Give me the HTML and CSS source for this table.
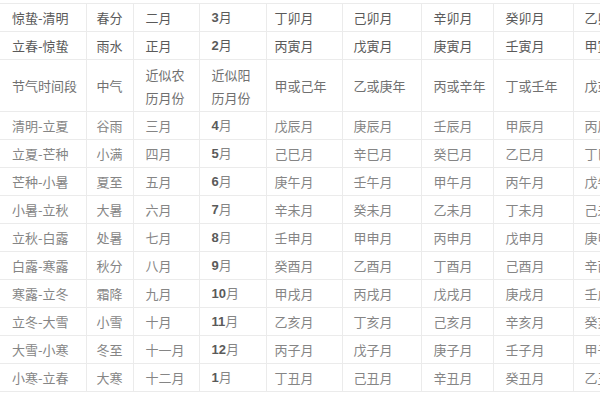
FILE: index.html
```html
<!DOCTYPE html>
<html lang="zh-CN">
<head>
<meta charset="utf-8">
<title>节气月份表</title>
<link rel="stylesheet" href="styles.css">
</head>
<body>
<div class="wrap">
<table class="tbl">
<colgroup>
<col class="c1"><col class="c2"><col class="c3"><col class="c4"><col class="c5"><col class="c6"><col class="c7"><col class="c8"><col class="c9">
</colgroup>
<tbody>
<tr class="dark"><td>惊蛰-清明</td><td>春分</td><td>二月</td><td><b class="n">3</b>月</td><td>丁卯月</td><td>己卯月</td><td>辛卯月</td><td>癸卯月</td><td>乙卯月</td></tr>
<tr class="dark"><td>立春-惊蛰</td><td>雨水</td><td>正月</td><td><b class="n">2</b>月</td><td>丙寅月</td><td>戊寅月</td><td>庚寅月</td><td>壬寅月</td><td>甲寅月</td></tr>
<tr class="head"><td>节气时间段</td><td>中气</td><td>近似农<br>历月份</td><td>近似阳<br>历月份</td><td>甲或己年</td><td>乙或庚年</td><td>丙或辛年</td><td>丁或壬年</td><td>戊或癸年</td></tr>
<tr><td>清明-立夏</td><td>谷雨</td><td>三月</td><td><b class="n">4</b>月</td><td>戊辰月</td><td>庚辰月</td><td>壬辰月</td><td>甲辰月</td><td>丙辰月</td></tr>
<tr><td>立夏-芒种</td><td>小满</td><td>四月</td><td><b class="n">5</b>月</td><td>己巳月</td><td>辛巳月</td><td>癸巳月</td><td>乙巳月</td><td>丁巳月</td></tr>
<tr><td>芒种-小暑</td><td>夏至</td><td>五月</td><td><b class="n">6</b>月</td><td>庚午月</td><td>壬午月</td><td>甲午月</td><td>丙午月</td><td>戊午月</td></tr>
<tr><td>小暑-立秋</td><td>大暑</td><td>六月</td><td><b class="n">7</b>月</td><td>辛未月</td><td>癸未月</td><td>乙未月</td><td>丁未月</td><td>己未月</td></tr>
<tr><td>立秋-白露</td><td>处暑</td><td>七月</td><td><b class="n">8</b>月</td><td>壬申月</td><td>甲申月</td><td>丙申月</td><td>戊申月</td><td>庚申月</td></tr>
<tr><td>白露-寒露</td><td>秋分</td><td>八月</td><td><b class="n">9</b>月</td><td>癸酉月</td><td>乙酉月</td><td>丁酉月</td><td>己酉月</td><td>辛酉月</td></tr>
<tr><td>寒露-立冬</td><td>霜降</td><td>九月</td><td><b class="n">10</b>月</td><td>甲戌月</td><td>丙戌月</td><td>戊戌月</td><td>庚戌月</td><td>壬戌月</td></tr>
<tr><td>立冬-大雪</td><td>小雪</td><td>十月</td><td><b class="n">11</b>月</td><td>乙亥月</td><td>丁亥月</td><td>己亥月</td><td>辛亥月</td><td>癸亥月</td></tr>
<tr><td>大雪-小寒</td><td>冬至</td><td>十一月</td><td><b class="n">12</b>月</td><td>丙子月</td><td>戊子月</td><td>庚子月</td><td>壬子月</td><td>甲子月</td></tr>
<tr><td>小寒-立春</td><td>大寒</td><td>十二月</td><td><b class="n">1</b>月</td><td>丁丑月</td><td>己丑月</td><td>辛丑月</td><td>癸丑月</td><td>乙丑月</td></tr>
</tbody>
</table>
</div>
</body>
</html>
```

FILE: styles.css
```css
html, body {
  margin: 0;
  padding: 0;
  background: #ffffff;
}
body {
  width: 600px;
  height: 400px;
  overflow: hidden;
  font-family: "Noto Sans CJK SC", "Noto Sans", sans-serif;
}
.wrap {
  padding-top: 3px;
}
.tbl {
  border-collapse: collapse;
  table-layout: fixed;
  width: 663px;
  font-size: 13px;
  color: #858585;
}
.c1 { width: 86px; }
.c2 { width: 47px; }
.c3 { width: 66px; }
.c4 { width: 67px; }
.c5 { width: 76px; }
.c6 { width: 79px; }
.c7 { width: 72px; }
.c8 { width: 80px; }
.c9 { width: 90px; }
.tbl td {
  border: 1px solid #ebebeb;
  height: 27px;
  padding: 0 0 0 12px;
  line-height: 16px;
  white-space: nowrap;
  text-align: left;
  vertical-align: middle;
}
.tbl td:first-child {
  border-left: none;
  padding-left: 12px;
}
.tbl td:nth-child(2) {
  padding-left: 10px;
}
.tbl td:nth-child(5) {
  padding-left: 8px;
}
.tbl td:nth-child(6),
.tbl td:nth-child(9) {
  padding-left: 11px;
}
.tbl .dark {
  color: #5a5a5a;
}
.tbl .head {
  color: #707070;
}
.tbl .head td {
  height: 51px;
  line-height: 23px;
}
.n {
  font-family: "Liberation Sans", Arial, sans-serif;
  font-weight: bold;
  color: #5a5a5a;
}
```
